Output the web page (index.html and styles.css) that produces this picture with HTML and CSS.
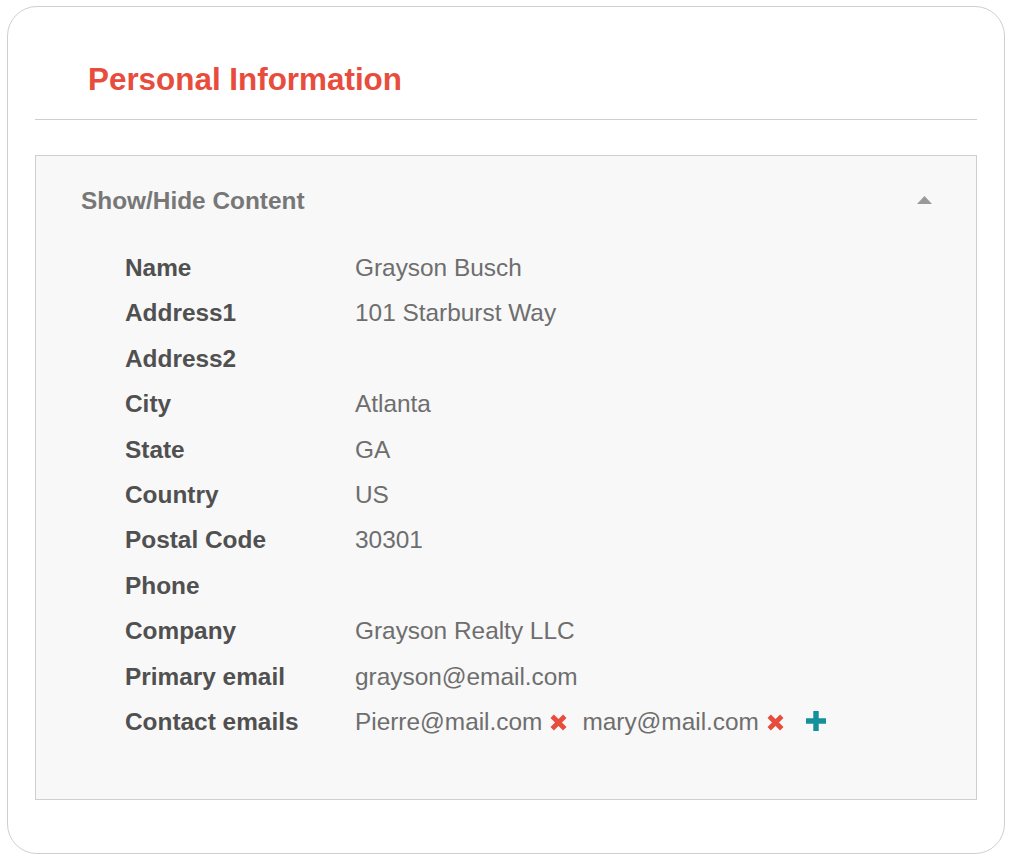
FILE: index.html
```html
<!DOCTYPE html>
<html lang="en">
<head>
<meta charset="utf-8">
<title>Personal Information</title>
<link rel="stylesheet" href="styles.css">
</head>
<body>
<div class="card">
  <h1 class="title">Personal Information</h1>
  <hr class="divider">
  <section class="panel">
    <div class="panel-head">
      <span class="panel-label">Show/Hide Content</span>
      <svg class="caret" width="15" height="8" viewBox="0 0 15 8"><polygon points="7.5,0 15,8 0,8" fill="#999"/></svg>
    </div>
    <dl class="fields">
      <div class="row"><dt>Name</dt><dd>Grayson Busch</dd></div>
      <div class="row"><dt>Address1</dt><dd>101 Starburst Way</dd></div>
      <div class="row"><dt>Address2</dt><dd></dd></div>
      <div class="row"><dt>City</dt><dd>Atlanta</dd></div>
      <div class="row"><dt>State</dt><dd>GA</dd></div>
      <div class="row"><dt>Country</dt><dd>US</dd></div>
      <div class="row"><dt>Postal Code</dt><dd>30301</dd></div>
      <div class="row"><dt>Phone</dt><dd></dd></div>
      <div class="row"><dt>Company</dt><dd>Grayson Realty LLC</dd></div>
      <div class="row"><dt>Primary email</dt><dd>grayson@email.com</dd></div>
      <div class="row"><dt>Contact emails</dt>
        <dd class="emails">
          <span class="email">Pierre@mail.com</span>
          <svg class="remove" width="17" height="17" viewBox="0 0 17 17"><path d="M2.2 2.2L14.8 14.8M14.8 2.2L2.2 14.8" stroke="#e74c3c" stroke-width="4.8"/></svg>
          <span class="email">mary@mail.com</span>
          <svg class="remove remove-last" width="17" height="17" viewBox="0 0 17 17"><path d="M2.2 2.2L14.8 14.8M14.8 2.2L2.2 14.8" stroke="#e74c3c" stroke-width="4.8"/></svg>
          <svg class="add" width="20" height="20" viewBox="0 0 20 20"><path d="M7.3 0h5.4v7.3h7.3v5.4h-7.3v7.3h-5.4v-7.3h-7.3v-5.4h7.3z" fill="#12919c"/></svg>
        </dd>
      </div>
    </dl>
  </section>
</div>
</body>
</html>
```
FILE: styles.css
```css
html, body {
  margin: 0;
  padding: 0;
  background: #fff;
}
body {
  padding: 6px 7px 0 7px;
  font-family: "Liberation Sans", Arial, sans-serif;
}
.card {
  width: 998px;
  height: 848px;
  box-sizing: border-box;
  border: 1px solid #cfcfcf;
  border-radius: 30px;
  padding: 53px 27px 0 27px;
  background: #fff;
}
.title {
  margin: 0 0 19px 53px;
  font-size: 31.4px;
  line-height: 40px;
  font-weight: bold;
  color: #e74c3c;
}
.divider {
  margin: 0;
  border: 0;
  border-top: 1px solid #cfcfcf;
  height: 0;
}
.panel {
  margin-top: 35px;
  background: #f8f8f8;
  border: 1px solid #cfcfcf;
  padding: 22px 44px 54px 45px;
  height: 645px;
  box-sizing: border-box;
}
.panel-head {
  display: flex;
  align-items: center;
  justify-content: space-between;
  height: 45.4px;
}
.panel-label {
  font-size: 24.4px;
  font-weight: bold;
  color: #777;
  line-height: 45.4px;
}
.caret {
  display: block;
  margin-top: -1px;
}
.fields {
  margin: 21.6px 0 0 44px;
  padding: 0;
}
.row {
  display: flex;
  height: 45.4px;
  align-items: center;
  font-size: 24.4px;
  line-height: 45.4px;
}
.row dt {
  width: 230px;
  flex: none;
  font-weight: bold;
  color: #505050;
}
.row dd {
  margin: 0;
  color: #6e6e6e;
}
.emails {
  display: flex;
  align-items: center;
}
.remove {
  display: block;
  margin: 1px 15px 0 8px;
}
.remove-last {
  margin-right: 22px;
}
.add {
  display: block;
  margin-top: -2px;
}
```
